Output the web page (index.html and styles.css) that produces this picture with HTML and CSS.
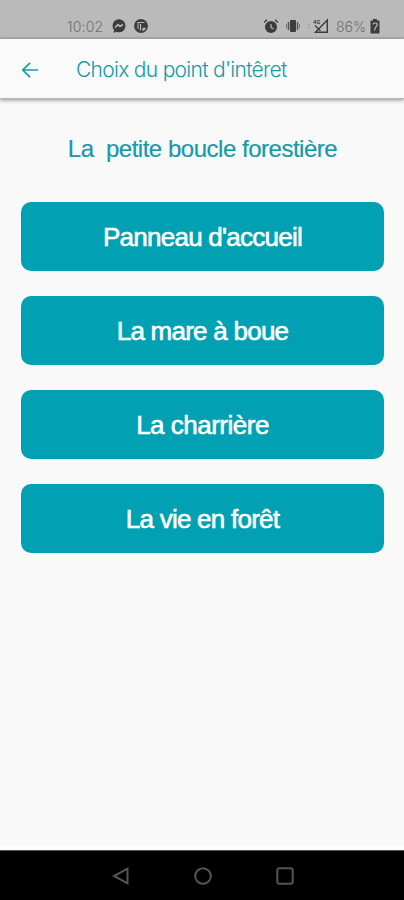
FILE: index.html
```html
<!DOCTYPE html>
<html lang="fr">
<head>
    <meta charset="UTF-8">
    <meta name="viewport" content="width=device-width, initial-scale=1.0">
    <title>Choix du point d'intêret</title>
    <link rel="stylesheet" href="styles.css">
</head>
<body>

    <div class="status-bar">
        <span class="clock">10:02</span>
        <svg class="messenger" width="14" height="14" viewBox="0 0 14 14">
            <circle cx="7" cy="6.8" r="6.5" fill="#3c3c3c"/>
            <path d="M2 11l-.5 2.800 3.500-1z" fill="#3c3c3c"/>
            <path d="M3 8.500l3-2.800 2 1.700 3-2" fill="none" stroke="#bababa" stroke-width="1.700"/>
        </svg>
        <svg class="app-icon" width="14" height="14" viewBox="0 0 14 14">
            <circle cx="7" cy="7" r="6.200" fill="#3c3c3c" stroke="#3c3c3c" stroke-width="1.400"/>
            <path d="M3.500 3.500h7M4 3.500v6.500" fill="none" stroke="#bababa" stroke-width="1"/>
            <path d="M6.500 5v6.500" stroke="#bababa" stroke-width="1.200"/>
            <path d="M8.500 8.800h3.500l-1 2-2.500 1.500z" fill="#bababa"/>
        </svg>
        <div class="status-right">
            <svg width="16" height="16" viewBox="0 0 16 16">
                <circle cx="8" cy="9" r="6" fill="#3c3c3c"/>
                <path d="M1 4.500l3-2.800M15 4.500l-3-2.800" stroke="#3c3c3c" stroke-width="1.300"/>
                <path d="M8 6v3.500l2.500 1.500" fill="none" stroke="#bababa" stroke-width="1.200"/>
            </svg>
            <svg class="vibrate" width="14" height="14" viewBox="0 0 14 14">
                <rect x="4" y="1" width="6" height="12" rx="1" fill="#3c3c3c"/>
                <path d="M2.500 3v8M11.500 3v8" stroke="#555" stroke-width="1.500"/>
                <path d="M.5 5v4M13.500 5v4" stroke="#777" stroke-width="1"/>
            </svg>
            <svg class="signal" width="21" height="16" viewBox="0 0 21 16">
                <path d="M1 5.500v1.500M1 9v1.500" stroke="#8c8c8c" stroke-width="1.200"/>
                <path d="M7.500 14.300L19.300 2v12.300z" fill="none" stroke="#3c3c3c" stroke-width="1.400"/>
                <path d="M7 7.500l5.500 5.500" stroke="#3c3c3c" stroke-width="1.300"/>
                <text x="5" y="5.500" class="network">4G</text>
            </svg>
            <span class="percent">86%</span>
            <svg class="battery" width="10" height="15" viewBox="0 0 10 15">
                <path d="M3 0h4v1.500h2.500v13h-9v-13H3z" fill="#3c3c3c"/>
                <path d="M3 5.500c0-2 4.200-2 4.200 0S5 7.500 4.500 11.500" fill="none" stroke="#bababa" stroke-width="1.200"/>
            </svg>
        </div>
    </div>

    <div class="header">
        <svg class="back" width="18" height="18" viewBox="0 0 18 18">
            <path d="M17 9H2M9 1.800L1.800 9 9 16.200" fill="none" stroke="#149aa9" stroke-width="1.700"/>
        </svg>
        <span class="title">Choix du point d'intêret</span>
    </div>

    <div class="container">
        <h2>La&nbsp; petite boucle forestière</h2>
        <button>Panneau d'accueil</button>
        <button>La mare à boue</button>
        <button class="charriere">La charrière</button>
        <button>La vie en forêt</button>
    </div>

    <div class="nav-bar">
        <svg width="18" height="18" viewBox="0 0 18 18">
            <path d="M15.500 1.700v14.600L2 9z"/>
        </svg>
        <svg width="18" height="18" viewBox="0 0 18 18">
            <circle cx="9" cy="9" r="7.800"/>
        </svg>
        <svg width="18" height="18" viewBox="0 0 18 18">
            <rect x="1.300" y="1.300" width="15.400" height="15.400" rx="2"/>
        </svg>
    </div>

</body>
</html>
```
FILE: styles.css
```css
* {
    box-sizing: border-box;
}
body {
    margin: 0;
    height: 900px;
    display: flex;
    flex-direction: column;
    font-family: "Liberation Sans", Arial, sans-serif;
    background-color: #f9f9f9;
    overflow: hidden;
}
.status-bar {
    height: 39px;
    padding: 15px 24px 0 67px;
    display: flex;
    align-items: center;
    background-color: #bababa;
    border-bottom: 2px solid #b0b0b0;
    color: #707070;
    font-family: Inter, sans-serif;
    font-weight: 300;
    font-size: 14px;
}
.clock {
    width: 45px;
    letter-spacing: 0.2px;
}
.app-icon {
    margin-left: 8px;
}
.status-right {
    margin-left: auto;
    display: flex;
    align-items: center;
}
.vibrate {
    margin-left: 7px;
}
.signal {
    margin-left: 8px;
}
.network {
    font-size: 5px;
    font-weight: bold;
    fill: #3c3c3c;
}
.percent {
    margin-left: 7px;
    width: 33px;
}
.battery {
    margin-left: 1px;
}
.header {
    height: 60px;
    padding: 2px 0 0 21px;
    display: flex;
    align-items: center;
    background-color: #fafafa;
    border-bottom: 1px solid #b8b8b8;
    box-shadow: 0 1px 4px rgba(0, 0, 0, 0.45);
}
.title {
    margin-left: 37px;
    color: #149aa9;
    font-family: Inter, sans-serif;
    font-weight: 300;
    font-size: 21px;
    letter-spacing: -0.7px;
}
.container {
    flex: 1;
    padding: 35px 20px 0 21px;
    border-bottom: 3px solid #fff;
}
h2 {
    margin: 0 0 38px;
    color: #149aa9;
    text-align: center;
    font-weight: normal;
    font-size: 24px;
    line-height: 30px;
    letter-spacing: -0.48px;
    -webkit-text-stroke: 0.2px #149aa9;
}
button {
    display: block;
    width: 100%;
    height: 69px;
    margin: 0 0 25px;
    padding: 2px 0 0;
    border: none;
    border-radius: 10px;
    background-color: #01a1b3;
    color: white;
    font-family: inherit;
    font-size: 26px;
    letter-spacing: -0.75px;
    -webkit-text-stroke: 0.6px white;
}
.charriere {
    letter-spacing: -0.5px;
}
.nav-bar {
    height: 50px;
    padding-left: 112px;
    display: flex;
    align-items: center;
    gap: 64px;
    background-color: #000;
    border-top: 1px solid #555;
}
.nav-bar svg {
    fill: none;
    stroke: #555;
    stroke-width: 2;
}
```
